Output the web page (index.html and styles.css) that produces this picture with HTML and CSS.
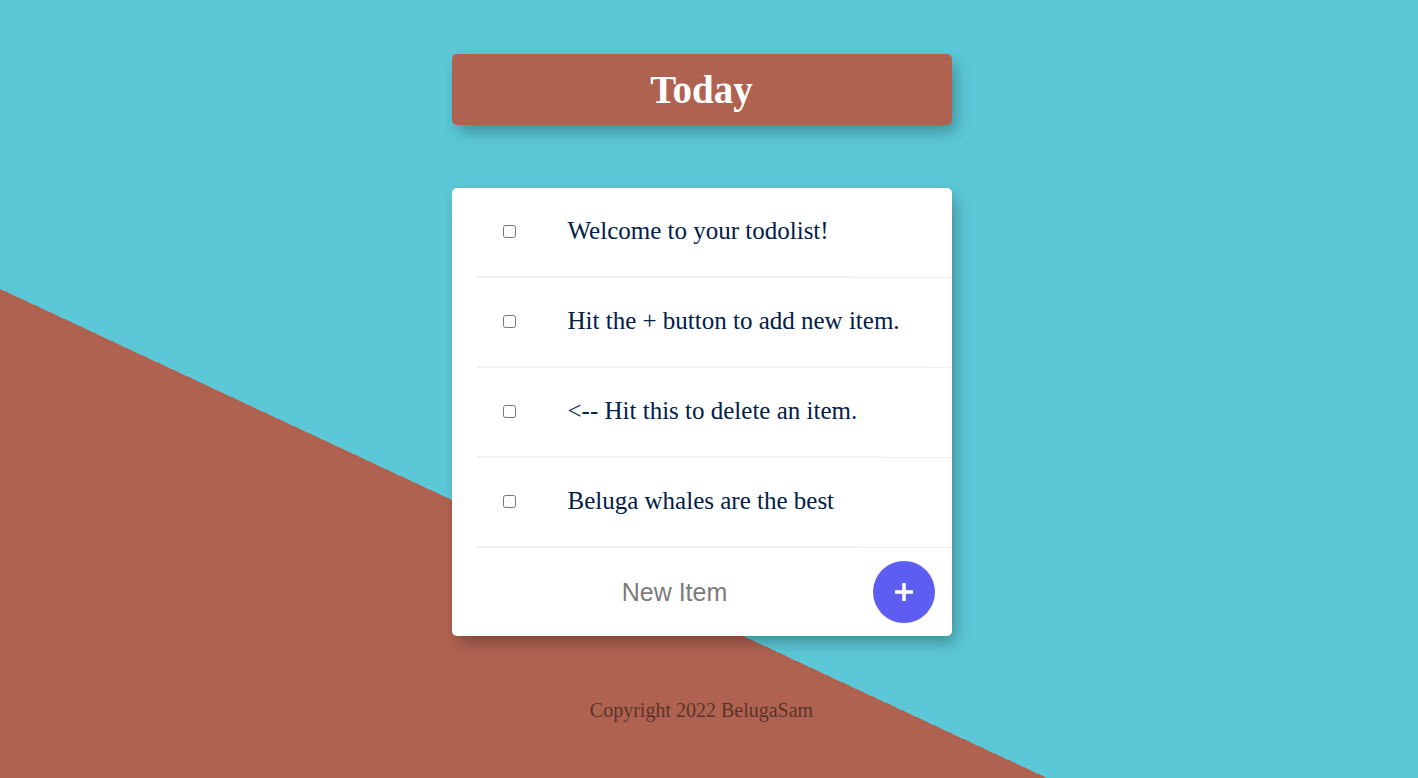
FILE: index.html
```
<!DOCTYPE html>
<html lang="en">
<head>
<meta charset="utf-8">
<title>To Do List</title>
<link rel="stylesheet" href="styles.css">
</head>
<body>
<div class="page">
  <div class="heading">
    <h1 class="heading-title">Today</h1>
  </div>

  <div class="box">
    <div class="item">
      <label class="item-content">
        <input class="item-check" type="checkbox">
        <p class="item-text">Welcome to your todolist!</p>
      </label>
    </div>
    <div class="item">
      <label class="item-content">
        <input class="item-check" type="checkbox">
        <p class="item-text">Hit the + button to add new item.</p>
      </label>
    </div>
    <div class="item">
      <label class="item-content">
        <input class="item-check" type="checkbox">
        <p class="item-text">&lt;-- Hit this to delete an item.</p>
      </label>
    </div>
    <div class="item">
      <label class="item-content">
        <input class="item-check" type="checkbox">
        <p class="item-text">Beluga whales are the best</p>
      </label>
    </div>

    <form class="new-form" onsubmit="return false;">
      <input class="new-input" type="text" name="newItem" placeholder="New Item" autocomplete="off">
      <button class="add-btn" type="submit" name="list" aria-label="Add">
        <svg width="20" height="20" viewBox="0 0 20 20" aria-hidden="true">
          <rect x="8.2" y="1" width="3.6" height="18" fill="#fff"/>
          <rect x="1" y="8.2" width="18" height="3.6" fill="#fff"/>
        </svg>
      </button>
    </form>
  </div>

  <footer class="footer">Copyright 2022 BelugaSam</footer>
</div>
</body>
</html>
```

FILE: styles.css
```
html {
  height: 100%;
  background: linear-gradient(205.04deg, #5bc7d7 861.9px, #af6250 861.9px);
}

body {
  margin: 0;
  min-height: 100%;
  font-family: "Liberation Serif", "Times New Roman", serif;
}

.page {
  display: flex;
  flex-direction: column;
  align-items: center;
  padding-top: 54px;
  padding-right: 15px;
}

.heading {
  width: 500px;
  height: 71px;
  box-sizing: border-box;
  background: #af6250;
  border-radius: 5px;
  box-shadow: 5px 8px 15px -2px rgba(0, 0, 0, 0.3);
  display: flex;
  align-items: center;
  justify-content: center;
}

.heading-title {
  margin: 0;
  color: #fff;
  font-size: 39px;
  font-weight: bold;
  line-height: 1;
}

.box {
  margin-top: 63px;
  width: 500px;
  background: #fff;
  border-radius: 5px;
  box-shadow: 5px 8px 15px -2px rgba(0, 0, 0, 0.3);
}

.item {
  height: 90px;
  box-sizing: border-box;
  margin-left: 25px;
  display: flex;
  border-bottom: 1px solid #f1f1f1;
}

.item-content {
  display: flex;
  align-items: center;
  padding-right: 25px;
  padding-bottom: 2px;
  border-bottom: 1px solid #f1f1f1;
}

.item-check {
  width: 13px;
  height: 13px;
  margin: 0 52px 0 26px;
}

.item-text {
  margin: 0;
  font-size: 25px;
  color: #00204a;
}

.new-form {
  height: 88px;
  margin-left: 25px;
  padding-right: 17px;
  display: flex;
  align-items: center;
}

.new-input {
  flex: 1;
  min-width: 0;
  height: 60px;
  border: none;
  background: transparent;
  text-align: center;
  font-family: "Liberation Sans", Arial, sans-serif;
  font-size: 25px;
  color: #333;
  padding: 0;
}

.new-input::placeholder {
  color: #7b7b7b;
  opacity: 1;
}

.new-input:focus {
  outline: none;
}

.add-btn {
  width: 62px;
  height: 62px;
  border: 0;
  border-radius: 50%;
  background: #5d5ef1;
  padding: 0;
  display: flex;
  align-items: center;
  justify-content: center;
  cursor: pointer;
}

.footer {
  margin-top: 63px;
  font-size: 20px;
  color: rgba(0, 0, 0, 0.5);
  text-align: center;
}
```
